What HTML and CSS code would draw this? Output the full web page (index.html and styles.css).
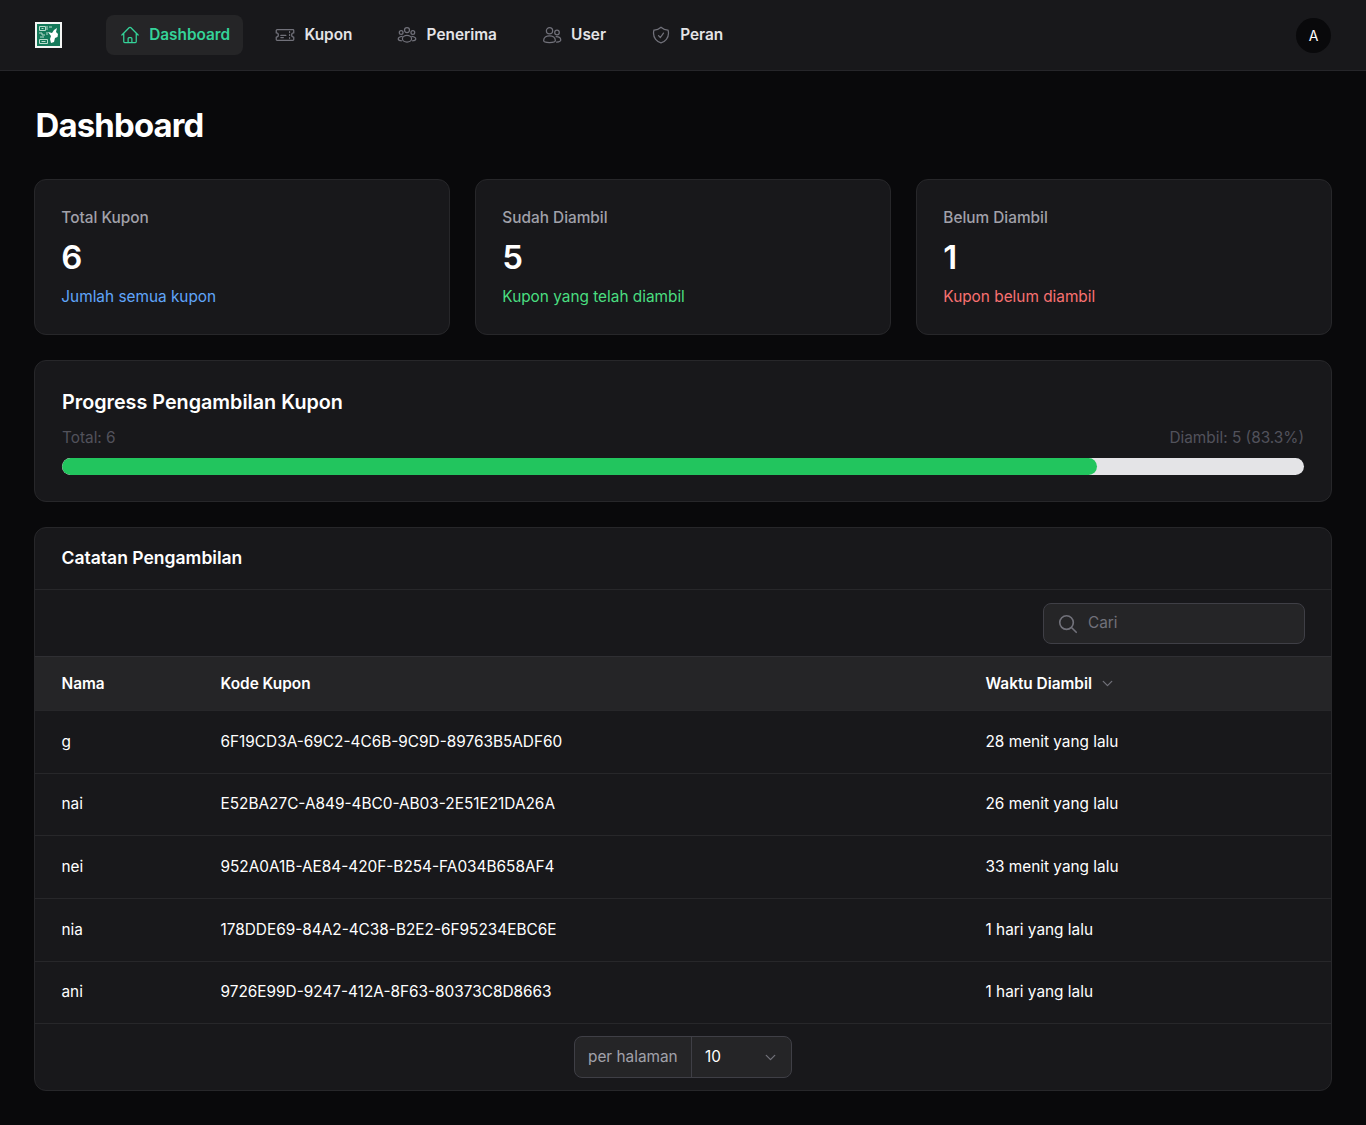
FILE: index.html
```html
<!DOCTYPE html>
<html lang="id">
<head>
  <meta charset="UTF-8">
  <meta name="viewport" content="width=device-width, initial-scale=1.0">
  <title>Dashboard</title>
  <link rel="stylesheet" href="styles.css">
</head>
<body>
  <header class="topbar">
    <div class="logo">
      <svg width="27" height="26" viewBox="0 0 27 26">
        <rect class="logo-frame" width="27" height="26"/>
        <rect class="logo-bg" x="2" y="2" width="23" height="22"/>
        <path class="logo-qr" d="M4.500 4.500h6v4h-6zM4.500 17.500h8v4h-8zM6.500 6.500h2M6.500 19.500h4M4 11h3v2h3M5 15h4M12 4v4M14 5h3M12 10v3"/>
        <path class="logo-goat" d="M13 10l4 1 2-3 3-2-1 4 2 2-.5 3-2.500 1-1 4-3 1-1-4 1-3z"/>
      </svg>
    </div>
    <nav class="nav">
      <a class="nav-item active" href="#">
        <svg class="nav-icon" viewBox="0 0 24 24"><path d="M2.250 12 11.200 3.050a1.130 1.130 0 0 1 1.600 0L21.750 12M4.500 9.750v10.130c0 .62.5 1.120 1.130 1.120H9.750v-4.880c0-.62.5-1.120 1.130-1.120h2.250c.62 0 1.120.5 1.120 1.120V21h4.130c.62 0 1.120-.5 1.120-1.120V9.750M8.250 21h8.250"/></svg>
        <span>Dashboard</span>
      </a>
      <a class="nav-item" href="#">
        <svg class="nav-icon" viewBox="0 0 24 24"><path d="M2.500 5.500h19a1 1 0 0 1 1 1v3a2.500 2.500 0 0 0 0 5v3a1 1 0 0 1-1 1h-19a1 1 0 0 1-1-1v-3a2.500 2.500 0 0 0 0-5v-3a1 1 0 0 1 1-1zM7 12.500h6M7 15h3M17.500 8v1M17.500 11.500v1M17.500 15v1"/></svg>
        <span>Kupon</span>
      </a>
      <a class="nav-item" href="#">
        <svg class="nav-icon" viewBox="0 0 24 24"><circle cx="12" cy="6" r="3"/><circle cx="5" cy="9" r="2.250"/><circle cx="19" cy="9" r="2.250"/><ellipse cx="12" cy="16.500" rx="5.500" ry="4"/><path d="M6.200 13.600C3.500 14 1.500 15.300 1.500 16.700c0 1.200 1.600 2 4 2.200M17.800 13.600c2.700.4 4.700 1.700 4.700 3.100 0 1.200-1.600 2-4 2.200"/></svg>
        <span>Penerima</span>
      </a>
      <a class="nav-item" href="#">
        <svg class="nav-icon" viewBox="0 0 24 24"><circle cx="9" cy="7" r="3.750"/><circle cx="18" cy="9" r="2.750"/><path d="M2 18.500c0-3.300 3.100-5.500 7-5.500s7 2.200 7 5.500c0 1.700-3 2.500-7 2.500s-7-.8-7-2.500zM17 14c3 0 5.500 1.500 5.500 4 0 1.500-2 2.300-5 2.500"/></svg>
        <span>User</span>
      </a>
      <a class="nav-item" href="#">
        <svg class="nav-icon" viewBox="0 0 24 24"><path d="M9 12.750 11.250 15 15 9.750M12 2.710A11.960 11.960 0 0 1 3.600 6 12 12 0 0 0 3 9.750c0 5.590 3.820 10.290 9 11.620 5.180-1.330 9-6.030 9-11.620 0-1.310-.21-2.570-.6-3.750h-.15c-3.200 0-6.100-1.250-8.250-3.290z"/></svg>
        <span>Peran</span>
      </a>
    </nav>
    <div class="avatar">A</div>
  </header>

  <main class="page">
    <h1 class="page-title">Dashboard</h1>

    <section class="stats">
      <div class="card stat">
        <div class="stat-label">Total Kupon</div>
        <div class="stat-value">6</div>
        <div class="stat-desc blue">Jumlah semua kupon</div>
      </div>
      <div class="card stat">
        <div class="stat-label">Sudah Diambil</div>
        <div class="stat-value">5</div>
        <div class="stat-desc green">Kupon yang telah diambil</div>
      </div>
      <div class="card stat">
        <div class="stat-label">Belum Diambil</div>
        <div class="stat-value">1</div>
        <div class="stat-desc red">Kupon belum diambil</div>
      </div>
    </section>

    <section class="card progress-card">
      <h2 class="progress-title">Progress Pengambilan Kupon</h2>
      <div class="progress-meta">
        <span>Total: 6</span>
        <span>Diambil: 5 (83.3%)</span>
      </div>
      <div class="progress-track">
        <div class="progress-fill" style="width: 83.33%"></div>
      </div>
    </section>

    <section class="card table-card">
      <h2 class="table-title">Catatan Pengambilan</h2>
      <div class="toolbar">
        <label class="search">
          <svg class="search-icon" viewBox="0 0 24 24"><path d="m21 21-5.200-5.200M17.800 10.400a7.400 7.400 0 1 1-14.800 0 7.400 7.400 0 0 1 14.800 0z"/></svg>
          <input type="text" placeholder="Cari">
        </label>
      </div>
      <table class="log-table">
        <thead>
          <tr>
            <th class="col-name">Nama</th>
            <th class="col-code">Kode Kupon</th>
            <th>
              <span class="sort">Waktu Diambil
                <svg class="chevron" viewBox="0 0 20 20"><path d="m5 7.500 5 5 5-5"/></svg>
              </span>
            </th>
          </tr>
        </thead>
        <tbody>
          <tr><td>g</td><td>6F19CD3A-69C2-4C6B-9C9D-89763B5ADF60</td><td>28 menit yang lalu</td></tr>
          <tr><td>nai</td><td>E52BA27C-A849-4BC0-AB03-2E51E21DA26A</td><td>26 menit yang lalu</td></tr>
          <tr><td>nei</td><td>952A0A1B-AE84-420F-B254-FA034B658AF4</td><td>33 menit yang lalu</td></tr>
          <tr><td>nia</td><td>178DDE69-84A2-4C38-B2E2-6F95234EBC6E</td><td>1 hari yang lalu</td></tr>
          <tr><td>ani</td><td>9726E99D-9247-412A-8F63-80373C8D8663</td><td>1 hari yang lalu</td></tr>
        </tbody>
      </table>
      <div class="table-footer">
        <div class="per-page">
          <span class="per-page-label">per halaman</span>
          <span class="per-page-value">10
            <svg class="per-page-chevron" viewBox="0 0 20 20"><path d="m5 7.500 5 5 5-5"/></svg>
          </span>
        </div>
      </div>
    </section>
  </main>
</body>
</html>
```

FILE: styles.css
```css
* { box-sizing: border-box; }
body { margin: 0; background: #09090b; color: #fff; font-family: Inter, "Liberation Sans", sans-serif; font-size: 15.36px; }
h1, h2 { margin: 0; }
a { text-decoration: none; color: inherit; }
svg { fill: none; stroke: currentColor; stroke-width: 1.5; stroke-linecap: round; stroke-linejoin: round; flex-shrink: 0; }

.topbar { height: 71px; display: flex; align-items: center; padding: 0 35px; background: #18181b; border-bottom: 1px solid #26262a; }
.logo { width: 27px; height: 27px; margin-right: 44px; }
.logo svg { display: block; stroke: none; }
.logo-frame { fill: #f4f6f5; }
.logo-bg { fill: #14795a; }
.logo-qr { stroke: #b9dccd; stroke-width: 1; stroke-linecap: butt; }
.logo-goat { fill: #fff; }
.nav { display: flex; gap: 18px; }
.nav-item { display: flex; align-items: center; gap: 9.500px; height: 40px; padding: 0 13px 0 13.700px; border-radius: 8px; font-weight: 600; color: #e4e4e7; }
.nav-item span { margin-top: -1px; }
.nav-icon { width: 20px; height: 20px; color: #71717a; }
.nav-item.active { background: #252527; color: #34d399; }
.nav-item.active .nav-icon { color: #34d399; }
.avatar { margin-left: auto; width: 35px; height: 35px; border-radius: 50%; background: #09090b; display: flex; align-items: center; justify-content: center; font-size: 14px; font-weight: 400; }

.page { padding: 0 34px; }
.page-title { font-size: 32.900px; font-weight: 700; letter-spacing: -0.82px; line-height: 40px; padding: 34px 1.500px 34px; }

.card { background: #18181b; border: 1px solid #27272a; border-radius: 12px; }
.stats { display: grid; grid-template-columns: repeat(3, 1fr); gap: 25px; margin-bottom: 25px; }
.stat { height: 156px; padding: 27px 26.330px; }
.stat-label { color: #a1a1aa; font-weight: 500; line-height: 22px; }
.stat-value { font-size: 33px; font-weight: 600; line-height: 44px; margin-top: 6px; }
.stat-desc { line-height: 22px; margin-top: 7px; }
.blue { color: #60a5fa; }
.green { color: #4ade80; }
.red { color: #f87171; }

.progress-card { height: 142px; padding: 27px; margin-bottom: 25px; }
.progress-title { font-size: 19.750px; font-weight: 600; line-height: 28px; }
.progress-meta { display: flex; justify-content: space-between; margin-top: 11px; color: #52525b; line-height: 22px; }
.progress-track { height: 17px; margin-top: 9px; border-radius: 9px; background: #e4e4e7; overflow: hidden; }
.progress-fill { height: 100%; background: #22c55e; border-radius: 9px; }

.table-card { overflow: hidden; }
.table-title { font-size: 17.550px; font-weight: 600; line-height: 24px; padding: 18px 26.500px 19px; border-bottom: 1px solid #27272a; }
.toolbar { display: flex; justify-content: flex-end; padding: 13px 26px 12px; border-bottom: 1px solid #2f2f33; }
.search { display: flex; align-items: center; gap: 7px; width: 262px; height: 41px; padding: 0 13px; background: #252527; border: 1px solid #3f3f46; border-radius: 8px; }
.search-icon { width: 22px; height: 22px; color: #71717a; stroke-width: 1.800; }
.search input { flex: 1; min-width: 0; border: none; outline: none; background: transparent; color: #fff; font: inherit; margin-top: -2px; }
.search input::placeholder { color: #71717a; }

.log-table { width: 100%; border-collapse: collapse; table-layout: fixed; }
.log-table th { height: 53.500px; text-align: left; font-weight: 600; background: #252527; }
.log-table td { height: 62.670px; border-top: 1px solid #27272a; padding-bottom: 2px; }
.log-table tr:last-child td { height: 62px; }
.col-name { width: 184.500px; }
.col-code { width: 765px; }
.log-table tr > :first-child { padding-left: 26.500px; }
.sort { display: inline-flex; align-items: center; gap: 7px; }
.chevron { width: 17px; height: 17px; color: #71717a; }

.table-footer { display: flex; justify-content: center; padding: 12px 0; border-top: 1px solid #27272a; }
.per-page { display: flex; width: 218px; height: 42px; background: #252527; border: 1px solid #3f3f46; border-radius: 8px; }
.per-page-label { width: 117px; display: flex; align-items: center; padding: 0 0 2px 13px; color: #a1a1aa; border-right: 1px solid #3f3f46; }
.per-page-value { flex: 1; display: flex; align-items: center; justify-content: space-between; padding: 0 12px 2px 13px; }
.per-page-chevron { width: 17px; height: 17px; color: #71717a; margin-top: 2px; }
```
